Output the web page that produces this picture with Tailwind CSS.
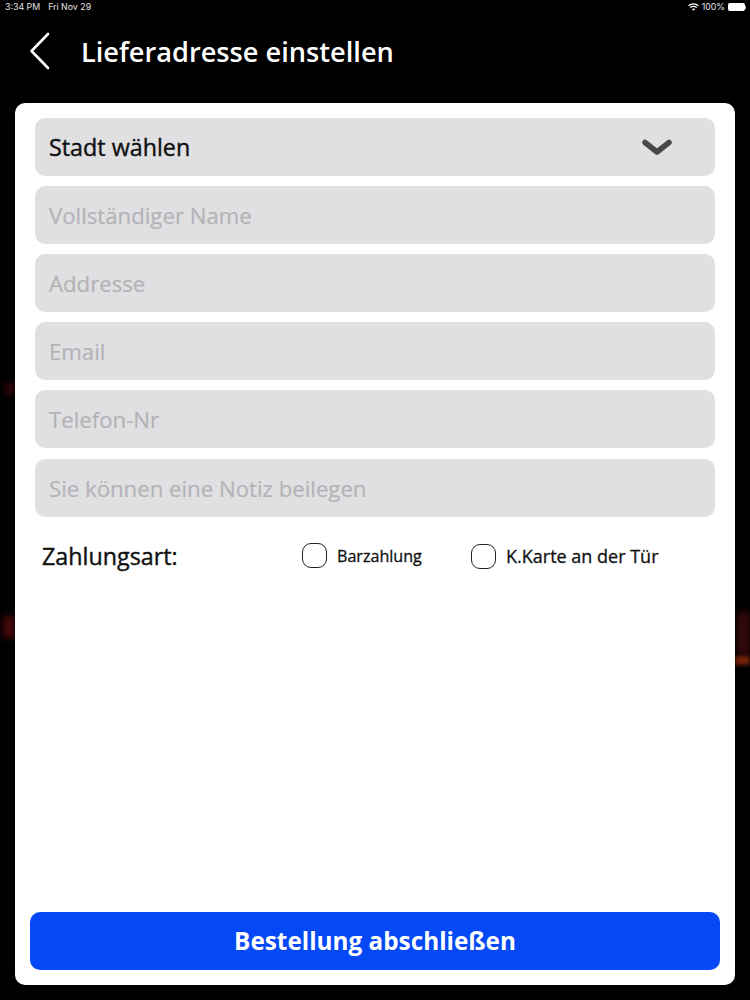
<!doctype html>
<html lang="de">
    <head>
        <meta charset="UTF-8" />
        <meta name="viewport" content="width=device-width, initial-scale=1.0" />
        <title>Lieferadresse einstellen</title>
        <script src="https://cdn.jsdelivr.net/npm/@tailwindcss/browser@4"></script>
    </head>
    <body class="bg-black font-['Open_Sans',sans-serif]">
        <div class="relative w-[750px] h-[1000px] overflow-hidden bg-black">
            <!-- red background showing at the card edges -->
            <div class="absolute left-[5px] top-[383px] w-[10px] h-[12px] bg-[#7a0c12] blur-[3px] opacity-40"></div>
            <div class="absolute left-[3px] top-[616px] w-[12px] h-[22px] bg-[#8a0f14] blur-[3px] opacity-50"></div>
            <div class="absolute left-[737px] top-[612px] w-[13px] h-[42px] bg-[#5a0f12] blur-[3px] opacity-60"></div>
            <div class="absolute left-[735px] top-[656px] w-[15px] h-[9px] bg-[#a8300f] blur-[2px] opacity-70"></div>

            <!-- status bar -->
            <div class="relative flex justify-between items-center h-[14px] pl-[5px] pr-[4px] text-[8.8px] text-[#e5e5e5] font-['Inter',sans-serif]">
                <div class="flex gap-[8px]">
                    <span>3:34 PM</span>
                    <span>Fri Nov 29</span>
                </div>
                <div class="flex items-center gap-[3px]">
                    <svg width="11" height="8" viewBox="0 0 11 8" fill="none" stroke="#fff" stroke-width="1.3">
                        <path d="M0.6 2.8 C3.3 0.2 7.7 0.2 10.4 2.8" />
                        <path d="M2.3 4.5 C4 3 7 3 8.7 4.5" />
                        <path d="M5.5 7.8 L3.9 6.1 C4.8 5.4 6.2 5.4 7.1 6.1 Z" fill="#fff" stroke="none" />
                    </svg>
                    <span>100%</span>
                    <div class="flex items-center">
                        <div class="w-[17px] h-[8px] bg-white rounded-[2px]"></div>
                        <div class="w-[1px] h-[3px] bg-[#bbb]"></div>
                    </div>
                </div>
            </div>

            <!-- header -->
            <div class="relative flex items-center h-[75px] pl-[29px] pb-[2px]">
                <svg width="22" height="38" viewBox="0 0 22 38" fill="none" stroke="#fff" stroke-width="2.6" stroke-linecap="round" stroke-linejoin="round">
                    <path d="M19 2 L2.5 19 L19 36" />
                </svg>
                <h1 class="ml-[30px] pt-[3px] text-[27.2px] font-semibold text-white">Lieferadresse einstellen</h1>
            </div>

            <!-- form card -->
            <div class="relative flex flex-col mx-[15px] mt-[14px] h-[882px] bg-white rounded-[10px] px-[20px] pt-[15px] pb-[15px]">
                <div class="flex flex-col gap-[10px]">
                    <div class="flex items-center justify-between h-[58px] bg-[#e0dfe1] rounded-[10px] pl-[14px] pr-[43px]">
                        <span class="text-[23.3px] [-webkit-text-stroke:0.4px] text-[#111]">Stadt wählen</span>
                        <svg width="30" height="17" viewBox="0 0 30 17" fill="none" stroke="#48474a" stroke-width="5.5" stroke-linecap="round" stroke-linejoin="round">
                            <path d="M3 3.5 L15 13 L27 3.5" />
                        </svg>
                    </div>
                    <div class="flex items-center h-[58px] pt-[1px] bg-[#e0dfe1] rounded-[10px] pl-[14px] text-[22.2px] [-webkit-text-stroke:0.2px] text-[#b4b3b7]">Vollständiger Name</div>
                    <div class="flex items-center h-[58px] pt-[1px] bg-[#e0dfe1] rounded-[10px] pl-[14px] text-[22.2px] [-webkit-text-stroke:0.2px] text-[#b4b3b7]">Addresse</div>
                    <div class="flex items-center h-[58px] pt-[1px] bg-[#e0dfe1] rounded-[10px] pl-[14px] text-[22.2px] [-webkit-text-stroke:0.2px] text-[#b4b3b7]">Email</div>
                    <div class="flex items-center h-[58px] pt-[1px] bg-[#e0dfe1] rounded-[10px] pl-[14px] text-[22.2px] [-webkit-text-stroke:0.2px] text-[#b4b3b7]">Telefon-Nr</div>
                    <div class="flex items-center h-[58px] pt-[1px] mt-[1px] bg-[#e0dfe1] rounded-[10px] pl-[14px] text-[22.2px] [-webkit-text-stroke:0.2px] text-[#b4b3b7]">Sie können eine Notiz beilegen</div>
                </div>

                <!-- payment -->
                <div class="flex items-center mt-[25px] h-[28px] pl-[7px]">
                    <span class="w-[260px] text-[23.3px] [-webkit-text-stroke:0.4px] text-[#111]">Zahlungsart:</span>
                    <div class="flex items-center w-[169px]">
                        <div class="w-[25px] h-[25px] border border-[#222] rounded-[9px]"></div>
                        <span class="ml-[10px] pt-[1px] text-[16.1px] [-webkit-text-stroke:0.3px] text-[#111]">Barzahlung</span>
                    </div>
                    <div class="flex items-center">
                        <div class="w-[25px] h-[25px] border border-[#222] rounded-[9px]"></div>
                        <span class="ml-[10px] pt-[1px] text-[18px] [-webkit-text-stroke:0.3px] text-[#111]">K.Karte an der Tür</span>
                    </div>
                </div>

                <button class="flex items-center justify-center h-[58px] -mx-[5px] mt-auto bg-[#0548f5] rounded-[10px] text-[24.3px] font-bold text-white">Bestellung abschließen</button>
            </div>
        </div>
    </body>
</html>
